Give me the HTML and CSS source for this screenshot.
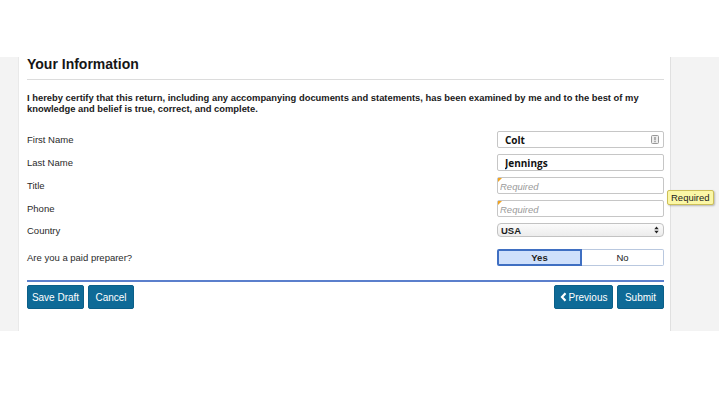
FILE: index.html
```html
<!DOCTYPE html>
<html lang="en">

<head>
    <meta charset="UTF-8" />
    <meta name="viewport" content="width=device-width, initial-scale=1.0" />
    <title>Your Information</title>
    <link rel="stylesheet" href="styles.css">
</head>

<body>
    <div class="top-space"></div>
    <div class="band">
        <div class="side-left"></div>
        <main class="panel">
            <h2>Your Information</h2>
            <hr>
            <p class="certify">I hereby certify that this return, including any accompanying documents and statements, has been examined by me and to the best of my knowledge and belief is true, correct, and complete.</p>

            <form class="info-form" onsubmit="return false">
                <div class="row">
                    <label for="firstName">First Name</label>
                    <div class="field">
                        <input type="text" id="firstName" value="Colt" />
                        <svg class="contact-icon" width="8" height="9" viewBox="0 0 8 9">
                            <rect x="0.5" y="0.5" width="7" height="8" rx="1" fill="#eee" stroke="#999" />
                            <rect x="3.4" y="2" width="1.2" height="3.3" fill="#888" />
                            <rect x="3.4" y="6" width="1.2" height="1.2" fill="#888" />
                        </svg>
                    </div>
                </div>
                <div class="row">
                    <label for="lastName">Last Name</label>
                    <div class="field">
                        <input type="text" id="lastName" value="Jennings" />
                    </div>
                </div>
                <div class="row">
                    <label for="title">Title</label>
                    <div class="field required">
                        <input type="text" id="title" placeholder="Required" />
                        <span class="tip">Required</span>
                    </div>
                </div>
                <div class="row">
                    <label for="phone">Phone</label>
                    <div class="field required">
                        <input type="text" id="phone" placeholder="Required" />
                    </div>
                </div>
                <div class="row">
                    <label>Country</label>
                    <div class="field">
                        <div class="select">
                            <span>USA</span>
                            <svg width="5" height="8" viewBox="0 0 5 8">
                                <path d="M0.3 3.3 L2.5 0.5 L4.7 3.3 Z" fill="#222" />
                                <path d="M0.3 4.7 L2.5 7.5 L4.7 4.7 Z" fill="#222" />
                            </svg>
                        </div>
                    </div>
                </div>
                <div class="row preparer">
                    <label>Are you a paid preparer?</label>
                    <div class="field toggle">
                        <button type="button" class="on">Yes</button>
                        <button type="button">No</button>
                    </div>
                </div>
            </form>

            <div class="actions">
                <div class="group">
                    <button type="button" class="btn save">Save Draft</button>
                    <button type="button" class="btn cancel">Cancel</button>
                </div>
                <div class="group">
                    <button type="button" class="btn prev">
                        <svg width="7" height="10" viewBox="0 0 7 10">
                            <polyline points="5.5,1.2 2,5 5.5,8.8" fill="none" stroke="#fff" stroke-width="2.2" />
                        </svg>
                        Previous
                    </button>
                    <button type="button" class="btn submit">Submit</button>
                </div>
            </div>
        </main>
        <div class="side-right"></div>
    </div>
</body>

</html>
```

FILE: styles.css
```css
body {
    margin: 0;
    background: #fff;
    font-family: "Liberation Sans", Arial, sans-serif;
    color: #1c1c1c;
}

.top-space {
    height: 57px;
}

.band {
    display: flex;
    height: 274px;
}

.side-left {
    width: 18px;
    background-color: #f3f3f3;
    border-right: 1px solid #e9e9e9;
}

.panel {
    width: 651px;
    padding: 0 6px 0 8px;
    box-sizing: border-box;
}

.side-right {
    flex: 1;
    background-color: #f3f3f3;
    border-left: 1px solid #e0e0e0;
}

.panel h2 {
    margin: 0;
    font-size: 14px;
    line-height: 14px;
    font-weight: bold;
    color: #161616;
}

.panel hr {
    margin: 8px 0 0;
    border: 0;
    border-top: 1px solid #dcdcdc;
}

.certify {
    margin: 12px 0 0;
    font-size: 9.4px;
    line-height: 11px;
    font-weight: bold;
    color: #1a1a1a;
}

.info-form {
    margin-top: 17px;
    display: flex;
    flex-direction: column;
    gap: 6px;
}

.row {
    display: flex;
    justify-content: space-between;
    align-items: center;
}

.row label {
    font-size: 9.5px;
    line-height: 11px;
    color: #2a2a2a;
}

.field {
    position: relative;
    width: 167px;
}

.field input {
    display: block;
    box-sizing: border-box;
    width: 100%;
    height: 17px;
    margin: 0;
    padding: 0 0 0 7px;
    border: 1px solid #c6c6c6;
    border-radius: 2px;
    font-family: "Open Sans", sans-serif;
    font-weight: 700;
    font-size: 10px;
    color: #111;
    outline: none;
}

.contact-icon {
    position: absolute;
    right: 5px;
    top: 4px;
}

.required input {
    padding-left: 2px;
}

.required input::placeholder {
    font-family: "Liberation Sans", Arial, sans-serif;
    font-style: italic;
    font-weight: normal;
    font-size: 9.5px;
    color: #9a9a9a;
}

/* little orange flag in the corner of required fields */
.required::before {
    content: "";
    position: absolute;
    left: 1px;
    top: 1px;
    border-top: 4px solid #f0a422;
    border-right: 4px solid transparent;
}

.tip {
    position: absolute;
    left: 170px;
    top: 13px;
    padding: 1px 3px;
    background-color: #fbf7a6;
    border: 1px solid #cdbf58;
    border-radius: 2px;
    box-shadow: 1px 1px 2px rgba(0, 0, 0, 0.25);
    font-size: 9.5px;
    line-height: 11px;
    color: #222;
    white-space: nowrap;
}

.select {
    box-sizing: border-box;
    height: 14px;
    display: flex;
    align-items: center;
    justify-content: space-between;
    padding: 0 4px 0 3px;
    border: 1px solid #c2c2c2;
    border-radius: 4px;
    background: linear-gradient(#fbfbfb, #ececec);
    font-size: 9.5px;
    font-weight: bold;
}

.preparer {
    margin-top: 6px;
}

.toggle {
    display: flex;
    height: 17px;
}

.toggle button {
    flex: 1;
    margin: 0;
    padding: 0;
    background-color: #fff;
    border: 1px solid #b9c8df;
    border-left: none;
    border-radius: 0 2px 2px 0;
    font-family: "Liberation Sans", Arial, sans-serif;
    font-size: 9.5px;
    color: #222;
}

.toggle button.on {
    background-color: #cfe0fb;
    border: 2px solid #3f6fc2;
    border-radius: 2px 0 0 2px;
    font-weight: bold;
}

.actions {
    margin-top: 14px;
    padding-top: 3px;
    border-top: 2px solid #5b7fcc;
    display: flex;
    justify-content: space-between;
}

.group {
    display: flex;
    gap: 4px;
}

.btn {
    height: 24px;
    margin: 0;
    padding: 0;
    background-color: #0e6a97;
    border: 1px solid #0b5f88;
    border-radius: 2px;
    font-family: "Liberation Sans", Arial, sans-serif;
    font-size: 10px;
    color: #fff;
    white-space: nowrap;
    display: flex;
    align-items: center;
    justify-content: center;
    gap: 2px;
}

.btn.save {
    width: 57px;
}

.btn.cancel {
    width: 46px;
}

.btn.prev {
    width: 59px;
}

.btn.submit {
    width: 47px;
}
```
